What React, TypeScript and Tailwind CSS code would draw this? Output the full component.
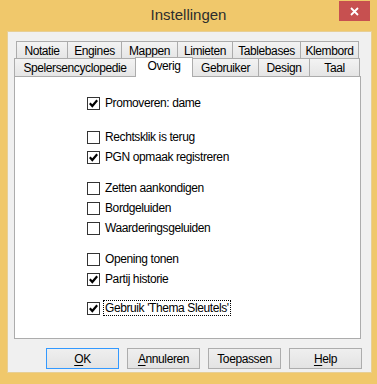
import React from "react";

const font = { fontFamily: '"Liberation Sans", Arial, sans-serif' };

type Tab = { label: string; w: number; selected?: boolean; noLeft?: boolean; right?: boolean };

const row1: Tab[] = [
  { label: "Notatie", w: 51 },
  { label: "Engines", w: 54 },
  { label: "Mappen", w: 56 },
  { label: "Limieten", w: 55 },
  { label: "Tablebases", w: 68 },
  { label: "Klembord", w: 59, right: true },
];

const row2: Tab[] = [
  { label: "Spelersencyclopedie", w: 121 },
  { label: "Overig", w: 58, selected: true, right: true },
  { label: "Gebruiker", w: 65, noLeft: true },
  { label: "Design", w: 51 },
  { label: "Taal", w: 51, right: true },
];

const options = [
  { label: "Promoveren: dame", checked: true, mt: 16 },
  { label: "Rechtsklik is terug", checked: false, mt: 14 },
  { label: "PGN opmaak registreren", checked: true, mt: 0 },
  { label: "Zetten aankondigen", checked: false, mt: 11 },
  { label: "Bordgeluiden", checked: false, mt: 0 },
  { label: "Waarderingsgeluiden", checked: false, mt: 0 },
  { label: "Opening tonen", checked: false, mt: 11 },
  { label: "Partij historie", checked: true, mt: 0 },
  { label: "Gebruik 'Thema Sleutels'", checked: true, mt: 9, focus: true },
];

const TabItem = ({ tab }: { tab: Tab }) => (
  <div
    style={{ width: tab.w }}
    className={`flex items-center justify-center border-t border-[#acacac] text-[12px] tracking-[-0.4px] text-black ${
      tab.noLeft ? "" : "border-l"
    } ${tab.right ? "border-r" : ""} ${
      tab.selected
        ? "h-[20px] -mt-px bg-white pb-[3px]"
        : "h-[18px] bg-linear-to-b from-[#f3f3f3] to-[#e5e5e5]"
    }`}
  >
    {tab.label}
  </div>
);

const CheckBox = ({ checked }: { checked: boolean }) => (
  <div className="w-[13px] h-[13px] border border-[#333333] bg-white flex items-center justify-center shrink-0">
    {checked && (
      <svg width="9" height="9" viewBox="0 0 9 9">
        <path d="M0.8 4.3 L3.3 7 L8.2 1.2" fill="none" stroke="#000" strokeWidth="2.2" />
      </svg>
    )}
  </div>
);

const Button = ({ children, primary }: { children: React.ReactNode; primary?: boolean }) => (
  <div
    className={`w-[73px] h-[21px] flex items-center justify-center border text-[12px] tracking-[-0.4px] text-black bg-linear-to-b from-[#efefef] to-[#e3e3e3] ${
      primary ? "border-[#3399ff]" : "border-[#adadad]"
    }`}
  >
    {children}
  </div>
);

export default function App() {
  return (
    <div style={font} className="w-[377px] h-[384px] bg-[#f0c86b] flex flex-col overflow-hidden">
      <div className="h-[31px] relative flex items-center justify-center shrink-0">
        <span className="text-[15px] text-[#2d2d2d] mt-[-1px]">Instellingen</span>
        <div className="absolute right-[7px] top-[1px] w-[31px] h-[20px] bg-[#c75050] flex items-center justify-center">
          <svg width="9" height="9" viewBox="0 0 9 9">
            <path d="M1 1 L8 8 M8 1 L1 8" stroke="#fff" strokeWidth="1.8" />
          </svg>
        </div>
      </div>

      <div className="ml-[7px] w-[365px] h-[342px] border border-[#e8cf94] bg-[#f0f0f0] flex flex-col">
        <div className="pt-[9px] pl-[6px] pr-[9px]">
          <div className="flex ml-[2px] h-[17px]">
            {row1.map((t) => (
              <TabItem key={t.label} tab={t} />
            ))}
          </div>
          <div className="flex items-start h-[18px] relative z-10">
            {row2.map((t) => (
              <TabItem key={t.label} tab={t} />
            ))}
          </div>
          <div className="w-[347px] h-[263px] border border-[#acacac] bg-white flex flex-col pl-[72px]">
            {options.map((o) => (
              <div key={o.label} style={{ marginTop: o.mt }} className="h-[20px] flex items-center">
                <CheckBox checked={o.checked} />
                <span
                  className={`ml-[3px] text-[12px] tracking-[-0.4px] text-black leading-[12px] ${
                    o.focus ? "border border-dotted border-black px-px py-px" : "border border-transparent px-px py-px"
                  }`}
                >
                  {o.label}
                </span>
              </div>
            ))}
          </div>
        </div>

        <div className="flex justify-end gap-[8px] pr-[9px] mt-[9px]">
          <Button primary>
            <span className="underline underline-offset-2">O</span>K
          </Button>
          <Button>
            <span className="underline underline-offset-2">A</span>nnuleren
          </Button>
          <Button>Toepassen</Button>
          <Button>
            <span className="underline underline-offset-2">H</span>elp
          </Button>
        </div>
      </div>
    </div>
  );
}
